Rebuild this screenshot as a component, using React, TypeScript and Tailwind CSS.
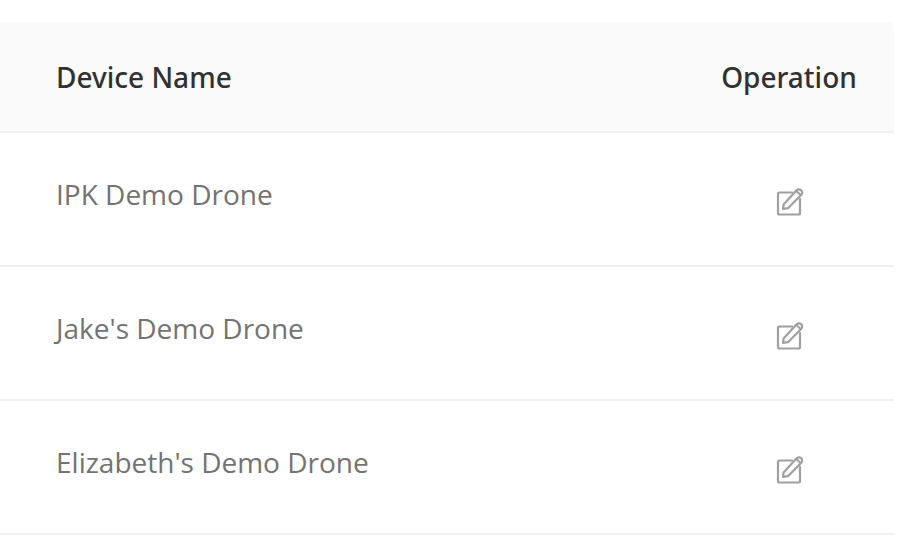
import React from "react";

interface Device {
  id: number;
  name: string;
}

const devices: Device[] = [
  { id: 1, name: "IPK Demo Drone" },
  { id: 2, name: "Jake's Demo Drone" },
  { id: 3, name: "Elizabeth's Demo Drone" }
];

function EditIcon() {
  return (
    <svg
      className="block size-[30px]"
      viewBox="0 0 30 30"
      fill="none"
      stroke="currentColor"
      strokeWidth="2.2"
      strokeLinejoin="round"
      strokeLinecap="round"
      aria-hidden="true"
    >
      {/* Sheet */}
      <path d="M18 5.500H5.500A1.500 1.500 0 0 0 4 7V26A1.500 1.500 0 0 0 5.500 27.500H24.500A1.500 1.500 0 0 0 26 26V12" />
      {/* Pencil */}
      <path d="M9 21.800L9.600 17.500L22.400 3.600A3.200 3.200 0 1 1 27.100 7.900L14 21.200Z" />
      <path d="M22.400 4L26.600 8" />
    </svg>
  );
}

export default function App() {
  return (
    <div className="min-h-screen bg-white pt-[22px] pr-[14px] font-['Open_Sans','Noto_Sans',sans-serif] text-[28px] leading-10">
      <table className="w-full border-separate border-spacing-0">
        <thead className="font-['Noto_Sans','Open_Sans',sans-serif]">
          <tr className="h-[111px] bg-[#fafafa] text-[#303133]">
            <th className="border-b-2 border-[#f0f0f0] pl-14 text-left font-medium">
              Device Name
            </th>
            <th className="w-[210px] rounded-tr-md border-b-2 border-[#f0f0f0] text-center font-medium">
              Operation
            </th>
          </tr>
        </thead>
        <tbody>
          {devices.map((device) => (
            <tr key={device.id} className="h-[134px] text-[#737373]">
              <td className="border-b-2 border-[#f0f0f0] pb-2.5 pl-14">{device.name}</td>
              <td className="border-b-2 border-[#f0f0f0] pt-1.5">
                <button
                  type="button"
                  aria-label={`Edit ${device.name}`}
                  className="mx-auto block cursor-pointer text-[#a0a0a0]"
                >
                  <EditIcon />
                </button>
              </td>
            </tr>
          ))}
        </tbody>
      </table>
    </div>
  );
}
